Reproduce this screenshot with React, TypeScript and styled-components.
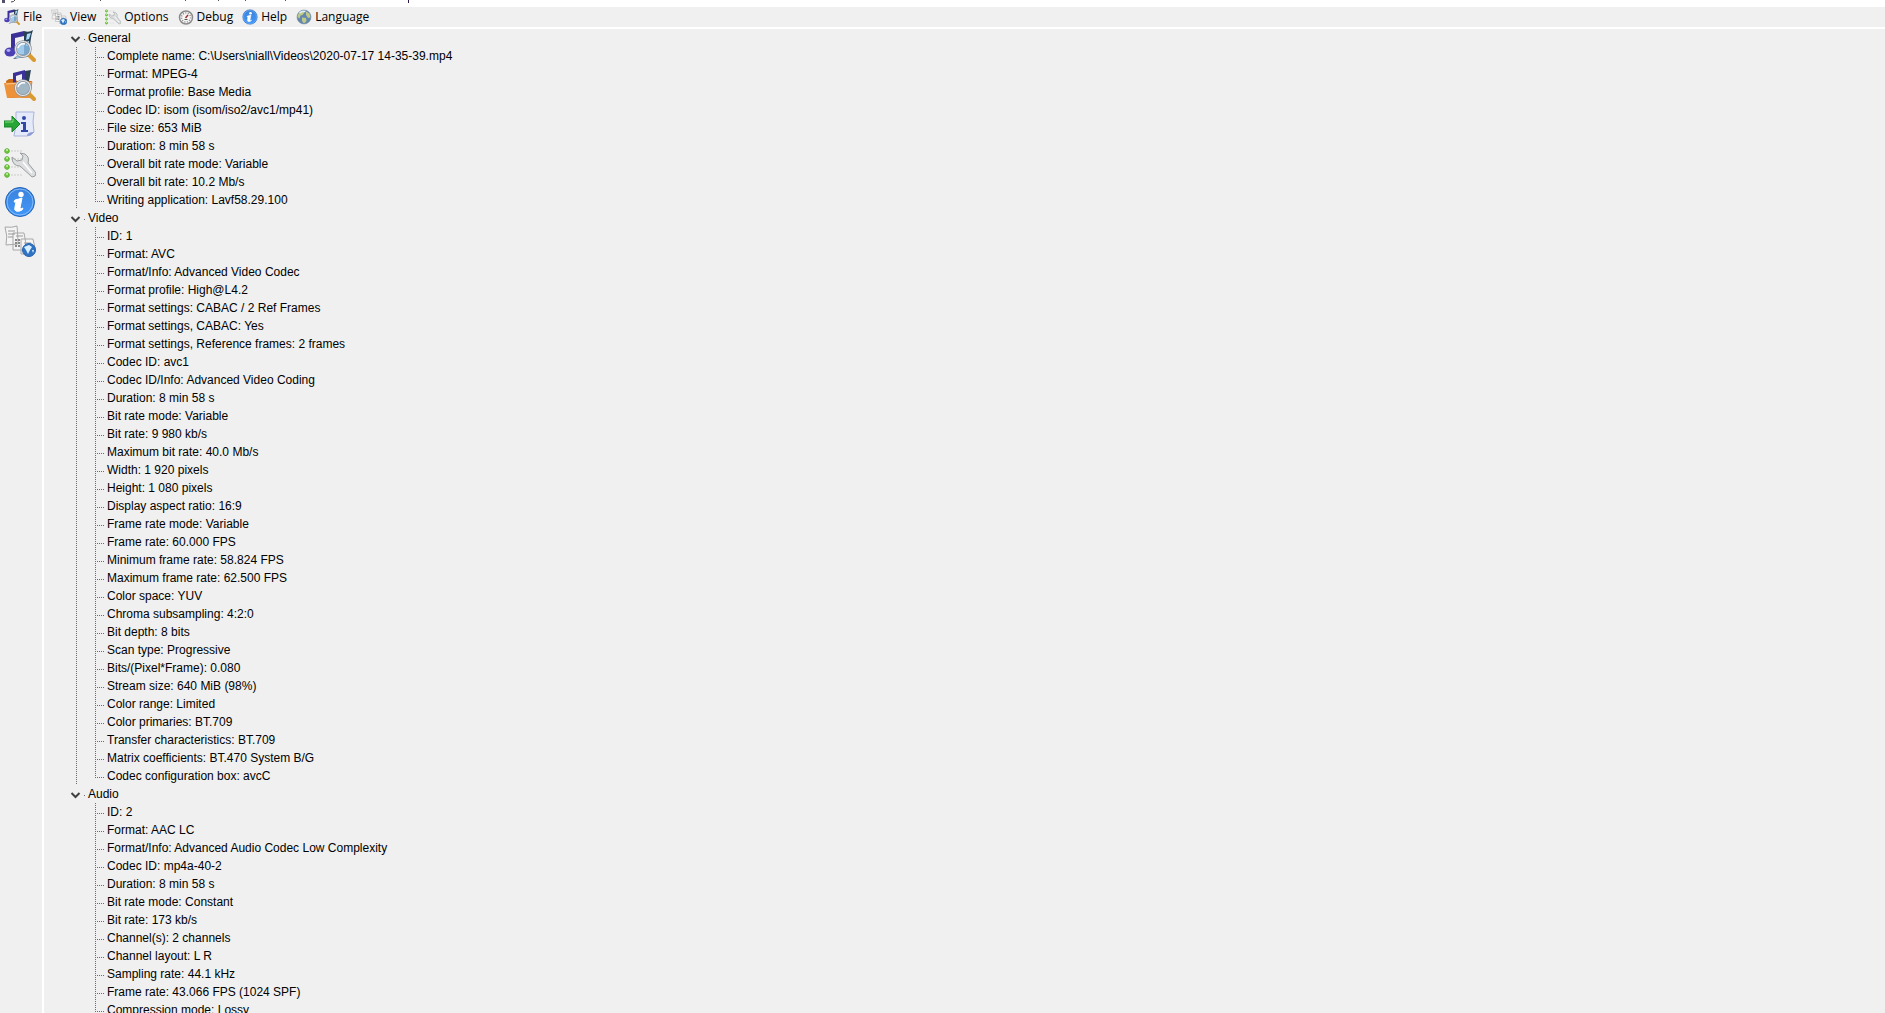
import React, { useState } from 'react';
import styled, { createGlobalStyle } from 'styled-components';

const GlobalStyle = createGlobalStyle`
  * { box-sizing: border-box; }
  html, body, #root { height: 100%; }
  body { margin: 0; background: #f0f0f0; overflow: hidden; }
`;

const Window = styled.div`
  display: flex;
  flex-direction: column;
  height: 100%;
  background: #f0f0f0;
  color: #000;
  font: 12px "Liberation Sans", Arial, sans-serif;
`;

const TitleBar = styled.header`
  flex: none;
  height: 7px;
  background: #fff;
  overflow: hidden;
  svg { display: block; }
`;

const MenuBar = styled.nav`
  flex: none;
  display: flex;
  align-items: center;
  height: 20px;
  padding-left: 4px;
  gap: 9px;
`;

const MenuButton = styled.button`
  display: flex;
  align-items: center;
  gap: 3px;
  height: 20px;
  padding: 0;
  border: 0;
  background: none;
  color: #000;
  font: 12px/20px "Open Sans", "Noto Sans", sans-serif;
`;

const Main = styled.div`
  flex: 1;
  display: flex;
  min-height: 0;
`;

const ToolBar = styled.aside`
  flex: none;
  display: flex;
  flex-direction: column;
  width: 42px;
  padding: 2px 3px;
  gap: 5px;
`;

const ToolButton = styled.button`
  width: 34px;
  height: 34px;
  padding: 1px;
  border: 0;
  background: none;
`;

const TreePane = styled.main`
  flex: 1;
  min-width: 0;
  padding-left: 26px;
  border-top: 2px solid #fff;
  border-left: 2px solid #fff;
  overflow: hidden;
`;

const Twisty = styled.button`
  display: flex;
  align-items: center;
  height: 18px;
  padding: 0;
  border: 0;
  background: none;
  color: #000;
  font: inherit;
  line-height: 18px;
`;

const Dot = styled.span`
  width: 1px;
  height: 1px;
  margin: 2px 3px 0;
  background: #707070;
`;

const Leaves = styled.ul<{ $joined: boolean }>`
  list-style: none;
  margin: 0 0 0 6px;
  padding: 0 0 0 19px;
  background: ${(p) => (p.$joined ? 'repeating-linear-gradient(#6c6c6c 0 1px, transparent 1px 2px) 0 0 / 1px 100% no-repeat' : 'none')};
`;

const Leaf = styled.li`
  display: flex;
  align-items: center;
  gap: 3px;
  height: 18px;
  line-height: 18px;
  white-space: nowrap;
  background: repeating-linear-gradient(#6c6c6c 0 1px, transparent 1px 2px) 0 0 / 1px 100% no-repeat;
  &:last-child { background-size: 1px 11px; }
  &::before {
    content: "";
    width: 9px;
    height: 1px;
    margin-top: 2px;
    background: repeating-linear-gradient(90deg, #6c6c6c 0 1px, transparent 1px 2px);
  }
`;

type Art = { size: number };

const Lens = () => (
  <g>
    <path d="M25 25l5 5" stroke="#d99a32" strokeWidth="4" strokeLinecap="round" />
    <circle cx="19" cy="19" r="7.500" fill="#8fc0ea" fillOpacity=".8" stroke="#8a8f96" strokeWidth="2.500" />
    <circle cx="19" cy="19" r="7.500" fill="none" stroke="#e4e8ec" strokeWidth="1.200" />
    <path d="M14 18q2-5 7-4" stroke="#fff" strokeWidth="1.500" fill="none" />
  </g>
);

const Note = () => (
  <g>
    <path d="M7 4l13-3v5l-9 2v15H7z" fill="#3b3199" />
    <ellipse cx="6" cy="22" rx="5.500" ry="4.500" fill="#4b40b4" />
    <ellipse cx="4.500" cy="20.500" rx="2" ry="1.400" fill="#b0a9f2" />
  </g>
);

const FileArt = ({ size }: Art) => (
  <svg width={size} height={size} viewBox="0 0 32 32" aria-hidden="true">
    <path d="M20 1q5 2 9-1-4 10-2 26l-18 3q6-5 11-5z" fill="#2c4054" />
    <path d="M23 4l4-1-2 6-3 1zM22 12l3-1v5h-3zM10 27l10-2v2l-7 1z" fill="#a8dcfa" />
    <Note />
    <Lens />
  </svg>
);

const FolderArt = ({ size }: Art) => (
  <svg width={size} height={size} viewBox="0 0 32 32" aria-hidden="true">
    <path d="M2 12l3-2h6l2 2h14q2 0 1 3l-2 14q-9-1-22 0z" fill="#c96a14" />
    <path d="M9 15V4l12-3v11h-3V5l-6 2v8z" fill="#3b3199" />
    <path d="M21 2l6-1-2 11h-4z" fill="#2c4054" />
    <path d="M0 14q14-1 28-1l-2 16q-12-1-23 0z" fill="#ee923a" />
    <path d="M2 15q12-1 25-1" stroke="#ffc98a" fill="none" />
    <Lens />
  </svg>
);

const ExportArt = ({ size }: Art) => (
  <svg width={size} height={size} viewBox="0 0 32 32" aria-hidden="true">
    <path d="M12 4h18q-2 10 0 20-3 4-7 4H10q3-12 2-24z" fill="#e4eafa" stroke="#a9b4dc" />
    <path d="M23 28q0-4 7-4-3 4-7 4z" fill="#8d9bd6" />
    <circle cx="20" cy="10" r="2" fill="#3148a8" />
    <path d="M17 14h5v8h2v2h-7v-2h2v-6h-2z" fill="#3148a8" />
    <path d="M0 13h8V8l8 8-8 8v-5H0z" fill="#27a536" stroke="#178126" />
    <path d="M1 14h8v-3" stroke="#85df7d" fill="none" />
  </svg>
);

const OptionsArt = ({ size }: Art) => (
  <svg width={size} height={size} viewBox="0 0 32 32" aria-hidden="true">
    {[4, 12, 20, 28].map((y) => (
      <g key={y}>
        <circle cx="3" cy={y} r="2.300" fill="#70c83e" stroke="#5cb035" />
        <circle cx="3" cy={y - 1} r="1" fill="#c9f5a8" />
        <path d={`M7 ${y}h11`} stroke="#c9cdc9" strokeDasharray="2 1" />
      </g>
    ))}
    <path d="M8 10l5 4 5-1 1-4-3-3q6 0 8 4 1 3 0 6l8 10q0 4-4 4L16 19q-8 0-8-9z" fill="#dcdedf" stroke="#9a9e9f" />
    <path d="M19 15l9 11" stroke="#fff" strokeWidth="1.500" />
  </svg>
);

const InfoArt = ({ size }: Art) => (
  <svg width={size} height={size} viewBox="0 0 32 32" aria-hidden="true">
    <defs>
      <linearGradient id="infoBlue" x2="0" y2="1">
        <stop offset="0" stopColor="#3c82dc" />
        <stop offset="1" stopColor="#3f97fa" />
      </linearGradient>
    </defs>
    <circle cx="16" cy="16" r="14.500" fill="url(#infoBlue)" stroke="#2464b8" />
    <circle cx="16" cy="16" r="13" fill="none" stroke="#83bcf8" />
    <circle cx="17" cy="8.500" r="2.700" fill="#fff" />
    <path d="M11 14q4-1 7-2l-2 10q0 2 3 0l-1 2q-3 2-6 1-2-1-1-4l1-5-2 0z" fill="#fff" stroke="#fff" />
  </svg>
);

const ViewArt = ({ size }: Art) => (
  <svg width={size} height={size} viewBox="0 0 32 32" aria-hidden="true">
    <path d="M1 2q7 1 12-1 1 10 1 18l-12 1q2-9-1-18zM9 8h11q2 8 2 17H9zM17 14h12q3 8 1 15H17z" fill="#f4f4f4" stroke="#a8a8a8" />
    <path d="M4 6h7M4 9h7M4 12h5M12 11h7M20 18h7M20 21h4" stroke="#999" />
    <path d="M12 14v9M15 14v9" stroke="#888" strokeWidth="2" strokeDasharray="2 1" />
    <circle cx="25" cy="25" r="6.500" fill="#2e74c4" stroke="#2a62ac" />
    <path d="M20 22l5-2 3 2-2 3-2 4-2-4zM28 25l2 0-1 3z" fill="#d9efff" />
  </svg>
);

const DebugArt = ({ size }: Art) => (
  <svg width={size} height={size} viewBox="0 0 32 32" aria-hidden="true">
    <circle cx="16" cy="17" r="13" fill="#f6f6f6" stroke="#8a8a8a" strokeWidth="3" />
    <circle cx="16" cy="17" r="9" fill="none" stroke="#8c8c8c" strokeWidth="3" strokeDasharray="2 3" />
    <path d="M15 18l5-6" stroke="#a03434" strokeWidth="3" fill="none" />
    <path d="M13 21h6" stroke="#555" strokeWidth="2" />
  </svg>
);

const GlobeArt = ({ size }: Art) => (
  <svg width={size} height={size} viewBox="0 0 32 32" aria-hidden="true">
    <circle cx="16" cy="16" r="14" fill="#6388b0" stroke="#64809a" />
    <path d="M5 9l8-5 4 3-4 5-4 1-2 6-4-3zM20 5l7 4 2 8-5 1-4-6zM12 17l8 1 1 6-5 5-4-5z" fill="#c1c987" />
    <path d="M7 8q5-5 12-3" stroke="#e4f0f4" strokeWidth="3" fill="none" />
  </svg>
);

const Chevron = () => (
  <svg width="11" height="9" viewBox="0 0 11 9" aria-hidden="true">
    <path d="M1.500 3l4 4 4-4" fill="none" stroke="#404040" strokeWidth="2" />
  </svg>
);

const TitleEdge = () => (
  <svg width="420" height="4" viewBox="0 0 420 4" aria-hidden="true">
    <path d="M2 0h3v3H2z" fill="#55506a" />
    <path d="M15 0q-1 2-4 2" fill="none" stroke="#444" />
    <path d="M100 0h1v1h-1zM185 0h1v1h-1zM218 0h1v1h-1zM245 0h1v1h-1zM285 0h1v1h-1z" fill="#555" />
    <path d="M408 0h1v3h-1z" fill="#301848" />
  </svg>
);

const menus = [
  { label: 'File', Icon: FileArt },
  { label: 'View', Icon: ViewArt },
  { label: 'Options', Icon: OptionsArt },
  { label: 'Debug', Icon: DebugArt },
  { label: 'Help', Icon: InfoArt },
  { label: 'Language', Icon: GlobeArt },
];

const tools = [
  { label: 'Open file', Icon: FileArt },
  { label: 'Open folder', Icon: FolderArt },
  { label: 'Export', Icon: ExportArt },
  { label: 'Options', Icon: OptionsArt },
  { label: 'About', Icon: InfoArt },
  { label: 'View', Icon: ViewArt },
];

const groups = [
  {
    name: 'General',
    items: [
      'Complete name: C:\\Users\\niall\\Videos\\2020-07-17 14-35-39.mp4',
      'Format: MPEG-4',
      'Format profile: Base Media',
      'Codec ID: isom (isom/iso2/avc1/mp41)',
      'File size: 653 MiB',
      'Duration: 8 min 58 s',
      'Overall bit rate mode: Variable',
      'Overall bit rate: 10.2 Mb/s',
      'Writing application: Lavf58.29.100',
    ],
  },
  {
    name: 'Video',
    items: [
      'ID: 1',
      'Format: AVC',
      'Format/Info: Advanced Video Codec',
      'Format profile: High@L4.2',
      'Format settings: CABAC / 2 Ref Frames',
      'Format settings, CABAC: Yes',
      'Format settings, Reference frames: 2 frames',
      'Codec ID: avc1',
      'Codec ID/Info: Advanced Video Coding',
      'Duration: 8 min 58 s',
      'Bit rate mode: Variable',
      'Bit rate: 9 980 kb/s',
      'Maximum bit rate: 40.0 Mb/s',
      'Width: 1 920 pixels',
      'Height: 1 080 pixels',
      'Display aspect ratio: 16:9',
      'Frame rate mode: Variable',
      'Frame rate: 60.000 FPS',
      'Minimum frame rate: 58.824 FPS',
      'Maximum frame rate: 62.500 FPS',
      'Color space: YUV',
      'Chroma subsampling: 4:2:0',
      'Bit depth: 8 bits',
      'Scan type: Progressive',
      'Bits/(Pixel*Frame): 0.080',
      'Stream size: 640 MiB (98%)',
      'Color range: Limited',
      'Color primaries: BT.709',
      'Transfer characteristics: BT.709',
      'Matrix coefficients: BT.470 System B/G',
      'Codec configuration box: avcC',
    ],
  },
  {
    name: 'Audio',
    items: [
      'ID: 2',
      'Format: AAC LC',
      'Format/Info: Advanced Audio Codec Low Complexity',
      'Codec ID: mp4a-40-2',
      'Duration: 8 min 58 s',
      'Bit rate mode: Constant',
      'Bit rate: 173 kb/s',
      'Channel(s): 2 channels',
      'Channel layout: L R',
      'Sampling rate: 44.1 kHz',
      'Frame rate: 43.066 FPS (1024 SPF)',
      'Compression mode: Lossy',
    ],
  },
];

export default function App() {
  const [closed, setClosed] = useState<string[]>([]);
  const toggle = (name: string) =>
    setClosed((c) => (c.includes(name) ? c.filter((n) => n !== name) : [...c, name]));

  return (
    <Window>
      <GlobalStyle />
      <TitleBar>
        <TitleEdge />
      </TitleBar>
      <MenuBar>
        {menus.map(({ label, Icon }) => (
          <MenuButton key={label}>
            <Icon size={16} />
            {label}
          </MenuButton>
        ))}
      </MenuBar>
      <Main>
        <ToolBar>
          {tools.map(({ label, Icon }) => (
            <ToolButton key={label} aria-label={label}>
              <Icon size={32} />
            </ToolButton>
          ))}
        </ToolBar>
        <TreePane>
          {groups.map(({ name, items }, i) => (
            <section key={name}>
              <Twisty aria-expanded={!closed.includes(name)} onClick={() => toggle(name)}>
                <Chevron />
                <Dot />
                {name}
              </Twisty>
              {!closed.includes(name) && (
                <Leaves $joined={i < groups.length - 1}>
                  {items.map((text) => (
                    <Leaf key={text}>{text}</Leaf>
                  ))}
                </Leaves>
              )}
            </section>
          ))}
        </TreePane>
      </Main>
    </Window>
  );
}
